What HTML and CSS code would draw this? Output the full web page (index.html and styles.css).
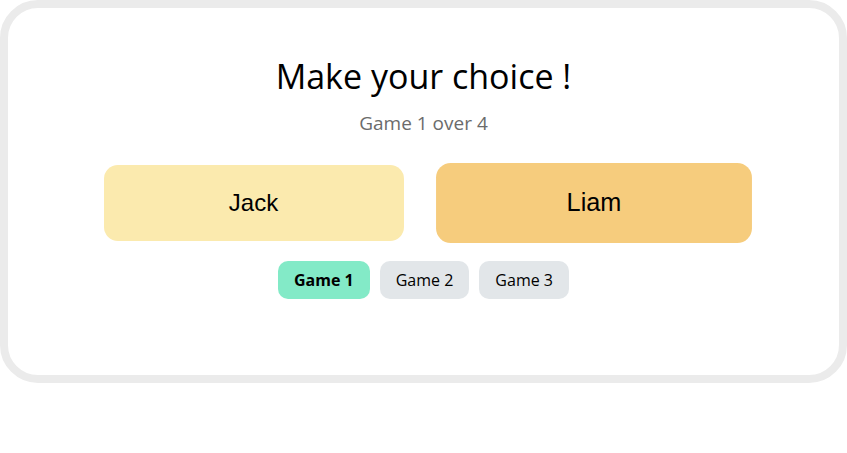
FILE: index.html
```html
<!DOCTYPE html>
<html>
<head>
<meta charset="utf-8">
<link rel="stylesheet" href="styles.css">
</head>
<body>
<div class="card">
  <h1 class="title">Make your choice !</h1>
  <p class="subtitle">Game 1 over 4</p>
  <div class="choices">
    <button class="choice choice-jack">Jack</button>
    <button class="choice choice-liam">Liam</button>
  </div>
  <div class="tabs">
    <button class="tab tab-active">Game 1</button>
    <button class="tab">Game 2</button>
    <button class="tab">Game 3</button>
  </div>
</div>
</body>
</html>
```
FILE: styles.css
```css
html, body {
  margin: 0;
  padding: 0;
  background: #ffffff;
}
body {
  font-family: "Open Sans", "Noto Sans", sans-serif;
}
.card {
  box-sizing: border-box;
  width: 847px;
  height: 383px;
  border: 8px solid #ebebeb;
  border-radius: 38px;
  background: #ffffff;
  display: flex;
  flex-direction: column;
  align-items: center;
  padding-top: 51px;
}
.title {
  margin: 0;
  font-size: 34px;
  font-weight: 400;
  line-height: 34px;
  color: #000000;
}
.subtitle {
  margin: 19px 0 0 0;
  font-size: 19px;
  line-height: 22px;
  color: #6b6b6b;
}
.choices {
  display: flex;
  gap: 40px;
  margin-top: 31px;
}
.choice {
  width: 300px;
  height: 76px;
  border: none;
  border-radius: 14px;
  font-family: "Liberation Sans", Arial, sans-serif;
  font-size: 24px;
  color: #000000;
  cursor: pointer;
}
.choice-jack {
  background: #fbeaae;
}
.choice-liam {
  background: #f6cc7d;
  transform: scale(1.053);
}
.tabs {
  display: flex;
  gap: 10px;
  margin-top: 20px;
}
.tab {
  height: 38px;
  padding: 0 16px;
  border: none;
  border-radius: 10px;
  background: #e2e6e9;
  font-family: "Open Sans", "Noto Sans", sans-serif;
  font-size: 16px;
  color: #000000;
}
.tab-active {
  background: #83eac7;
  font-weight: 700;
  padding: 0 16px;
}
```
